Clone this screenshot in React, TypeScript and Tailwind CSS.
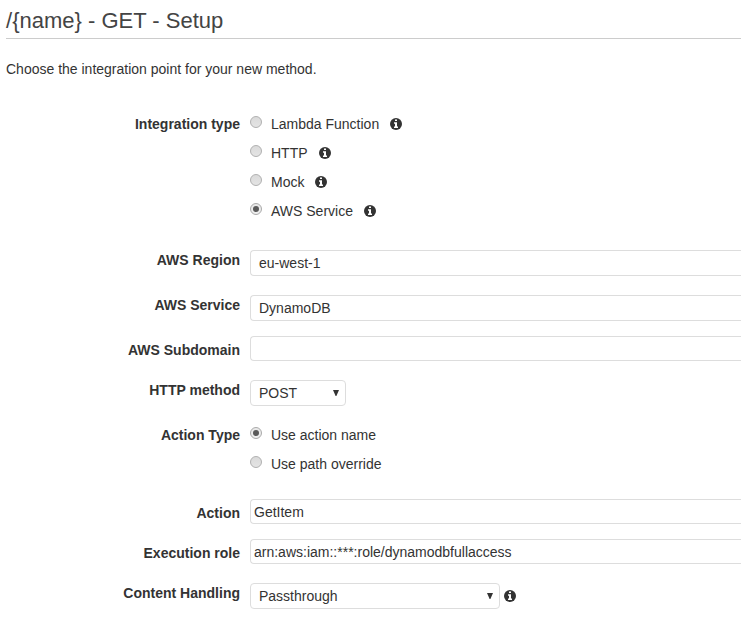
import React from 'react';

function Info() {
  return (
    <svg className="block h-3 w-3 shrink-0" viewBox="0 0 12 12">
      <circle cx="6" cy="6" r="6" fill="#333" />
      <path d="M5 1.5h2v1.6H5zM4 4.3h3v4.2h1V10H4V8.5h1V5.8H4z" fill="#fff" />
    </svg>
  );
}

function Radio({ label, on = false, info = false }: { label: string; on?: boolean; info?: boolean }) {
  return (
    <div className="flex h-[29px] items-center">
      <span className={`mb-1 mr-[9px] flex h-3 w-3 items-center justify-center rounded-full border bg-gradient-to-b ${on ? 'border-[#aaa] from-[#e8e8e8] to-[#f0f0f0]' : 'border-[#b0b0b0] from-[#dadada] to-[#e4e4e4]'}`}>
        {on && <span className="h-1.5 w-1.5 rounded-full bg-[#5a5a5a]" />}
      </span>
      <span className="mr-[11px]">{label}</span>
      {info && <Info />}
    </div>
  );
}

function Row({ label, className, labelClass = '', children }: { label: string; className: string; labelClass?: string; children: React.ReactNode }) {
  return (
    <div className={`flex items-start ${className}`}>
      <div className={`mr-[10px] w-[240px] shrink-0 text-right font-bold ${labelClass}`}>{label}</div>
      {children}
    </div>
  );
}

function Field({ value = '', className }: { value?: string; className: string }) {
  return <div className={`flex flex-1 items-center whitespace-pre rounded-l-sm border border-r-0 border-[#ddd] ${className}`}>{value}</div>;
}

function Select({ value, className }: { value: string; className: string }) {
  return (
    <div className={`flex h-[26px] items-center justify-between rounded-sm border border-[#ddd] pl-[8px] pr-[6px] ${className}`}>
      {value}
      <svg className="h-[6px] w-[6px]" viewBox="0 0 6 6"><path d="M0 0h6L3.4 6h-.8z" fill="#333" /></svg>
    </div>
  );
}

export default function App() {
  return (
    <main className="h-[622px] w-[741px] overflow-hidden bg-white font-['Liberation_Sans',sans-serif] text-[14px] leading-5 text-[#333]">
      <h1 className="ml-[6px] h-[39px] border-b border-[#ccc] pt-[6px] text-[22px] leading-[30px] text-[#444]">/{'{name}'} - GET - Setup</h1>
      <p className="mt-5 pl-[6px]">Choose the integration point for your new method.</p>
      <Row label="Integration type" className="mt-[30px] h-[141px]" labelClass="pt-[5px]">
        <div>
          <Radio label="Lambda Function" info />
          <Radio label="HTTP" info />
          <Radio label="Mock" info />
          <Radio label="AWS Service" on info />
        </div>
      </Row>
      <Row label="AWS Region" className="h-[45px]"><Field value="eu-west-1" className="h-[26px] pl-[8px]" /></Row>
      <Row label="AWS Service" className="h-[41px]"><Field value="DynamoDB" className="h-[26px] pl-[8px]" /></Row>
      <Row label="AWS Subdomain" className="h-[44px]" labelClass="pt-1"><Field className="h-[25px]" /></Row>
      <Row label="HTTP method" className="h-[40px]"><Select value="POST" className="w-[96px]" /></Row>
      <Row label="Action Type" className="h-[79px]" labelClass="pt-[5px]">
        <div>
          <Radio label="Use action name" on />
          <Radio label="Use path override" />
        </div>
      </Row>
      <Row label="Action" className="h-[40px]" labelClass="pt-1"><Field value="GetItem" className="h-[25px] pl-[3px]" /></Row>
      <Row label="Execution role" className="h-[44px]" labelClass="pt-1"><Field value="arn:aws:iam::***:role/dynamodbfullaccess" className="h-[25px] pl-[3px]" /></Row>
      <Row label="Content Handling" className="h-[39px]">
        <Select value="Passthrough" className="w-[250px]" />
        <div className="ml-1 mt-[7px]"><Info /></div>
      </Row>
    </main>
  );
}
